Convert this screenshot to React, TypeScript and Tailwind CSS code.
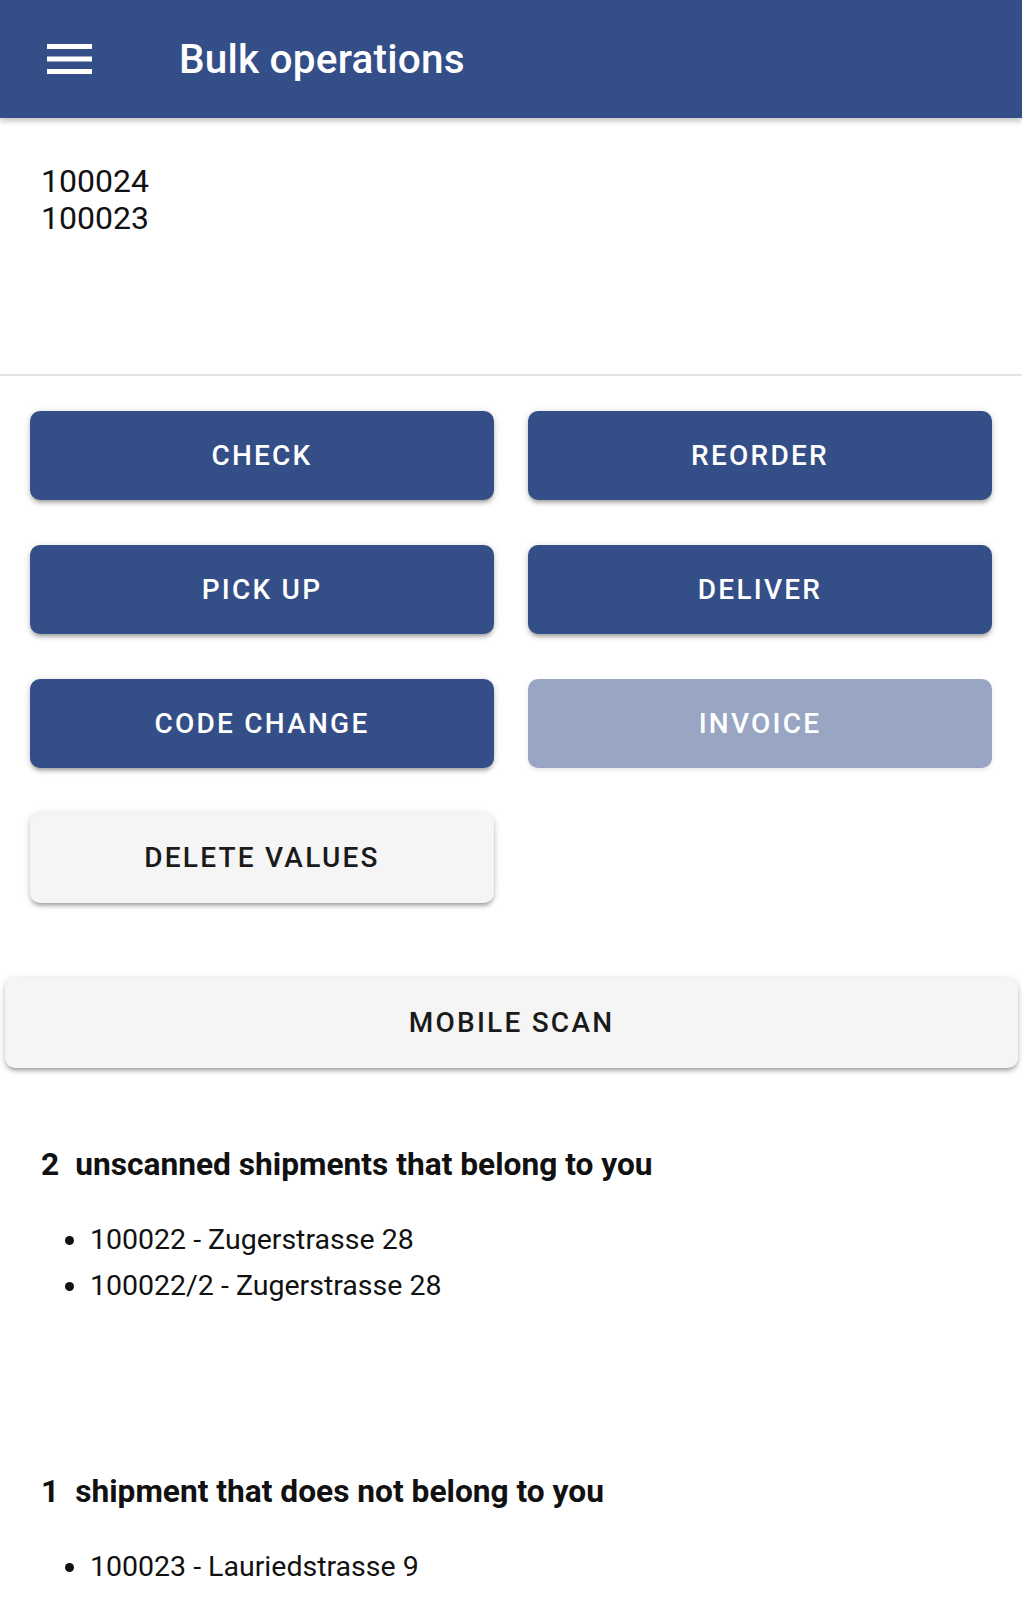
import React from 'react';

const ACTIONS = [
  { label: 'CHECK', disabled: false },
  { label: 'REORDER', disabled: false },
  { label: 'PICK UP', disabled: false },
  { label: 'DELIVER', disabled: false },
  { label: 'CODE CHANGE', disabled: false },
  { label: 'INVOICE', disabled: true },
];

const MINE = ['100022 - Zugerstrasse 28', '100022/2 - Zugerstrasse 28'];
const OTHERS = ['100023 - Lauriedstrasse 9'];

const btnShadow =
  'shadow-[0_4px_4px_-2px_rgba(0,0,0,0.28),0_2px_6px_0_rgba(0,0,0,0.14),0_1px_10px_0_rgba(0,0,0,0.08)]';

export default function App() {
  return (
    <div className="min-h-[1600px] bg-white font-['Roboto',sans-serif] text-[#111]">
      {/* App bar */}
      <header className="relative z-10 flex h-[118px] items-center bg-[#344e88] shadow-[0_3px_6px_rgba(0,0,0,0.25)]">
        <svg className="ml-[47px] h-[30px] w-[45px]" viewBox="0 0 45 30" fill="white">
          <rect x="0" y="0" width="45" height="5" />
          <rect x="0" y="12.5" width="45" height="5" />
          <rect x="0" y="25" width="45" height="5" />
        </svg>
        <h1 className="ml-[87px] text-[40.5px] font-medium leading-none tracking-[0.005em] text-white">
          Bulk operations
        </h1>
      </header>

      {/* Scanned values */}
      <div className="h-[258px] border-b-2 border-[#e3e3e3] px-[41px] pt-[45px] text-[32px] leading-[37px] text-[#111]">
        <div>100024</div>
        <div>100023</div>
      </div>

      {/* Actions */}
      <div className="grid grid-cols-2 gap-x-[34px] gap-y-[45px] px-[30px] pt-[35px]">
        {ACTIONS.map((a) => (
          <button
            key={a.label}
            disabled={a.disabled}
            className={`h-[89px] rounded-[10px] text-[28px] font-medium tracking-[0.08em] text-white ${
              a.disabled ? 'bg-[#98a6c4] shadow-[0_2px_5px_rgba(0,0,0,0.1)]' : `bg-[#344e88] ${btnShadow}`
            }`}
          >
            {a.label}
          </button>
        ))}
        <button
          className={`h-[90px] rounded-[10px] bg-[#f5f5f5] text-[28px] font-medium tracking-[0.08em] text-[#1a1a1a] ${btnShadow}`}
        >
          DELETE VALUES
        </button>
      </div>

      <div className="pl-[5px] pr-[4px] pt-[75px]">
        <button
          className={`h-[90px] w-full rounded-[10px] bg-[#f5f5f5] text-[28px] font-medium tracking-[0.08em] text-[#1a1a1a] ${btnShadow}`}
        >
          MOBILE SCAN
        </button>
      </div>

      {/* Unscanned shipments */}
      <section className="px-[41px] pt-[77px]">
        <h2 className="text-[31.7px] font-bold leading-[40px]">
          <span className="mr-[16px]">2</span>unscanned shipments that belong to you
        </h2>
        <ul className="mt-[32px] list-disc pl-[48px] text-[28.5px] leading-[46px]">
          {MINE.map((s) => (
            <li key={s} className="pl-[1px]">{s}</li>
          ))}
        </ul>
      </section>

      <section className="px-[41px] pt-[163px]">
        <h2 className="text-[31.7px] font-bold leading-[40px]">
          <span className="mr-[16px]">1</span>shipment that does not belong to you
        </h2>
        <ul className="mt-[32px] list-disc pl-[48px] text-[28.5px] leading-[46px]">
          {OTHERS.map((s) => (
            <li key={s} className="pl-[1px]">{s}</li>
          ))}
        </ul>
      </section>
    </div>
  );
}
